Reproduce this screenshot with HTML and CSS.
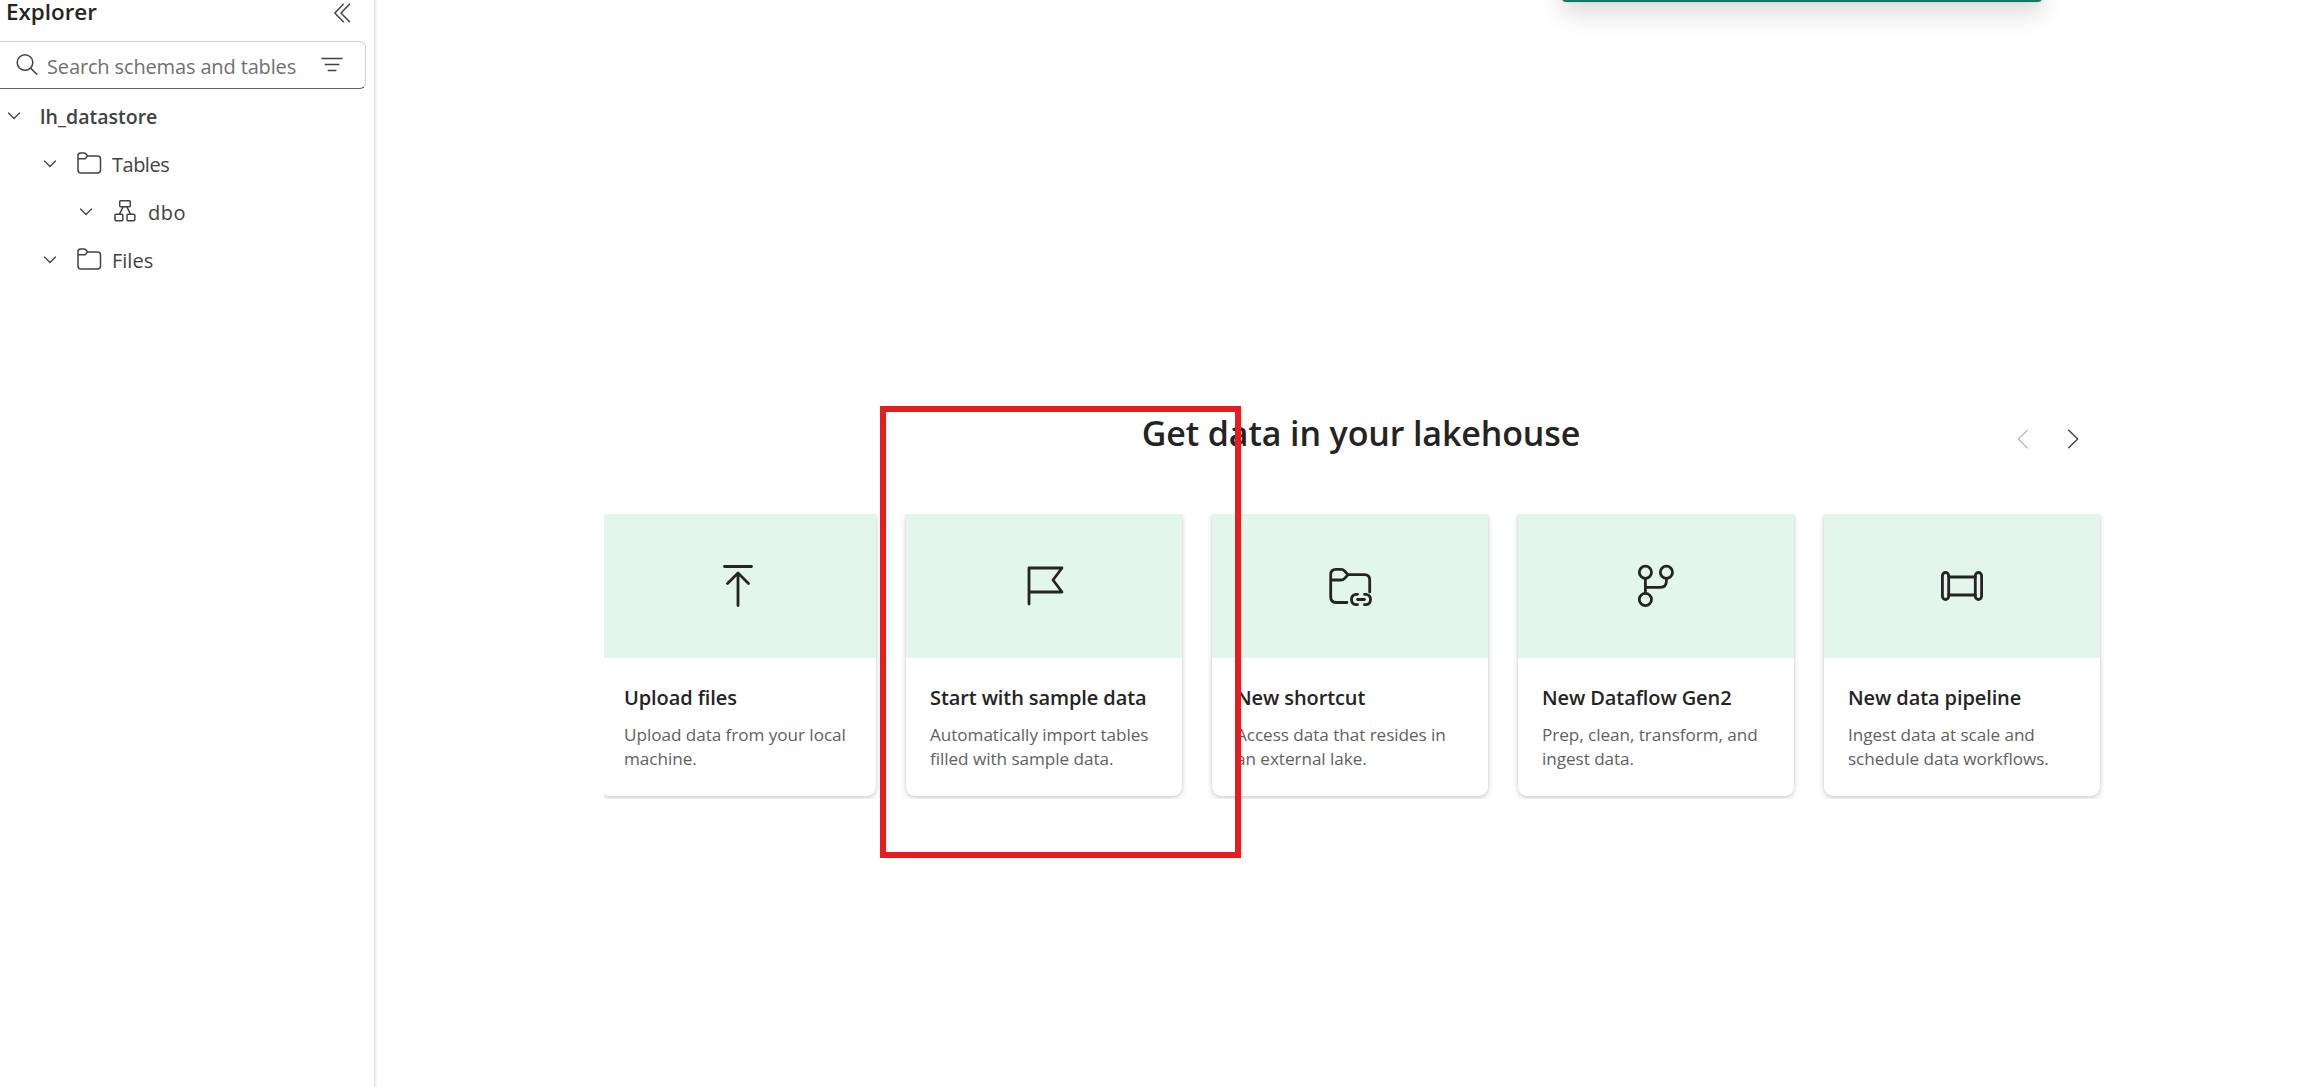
FILE: index.html
```html
<!DOCTYPE html>
<html lang="en">
<head>
<meta charset="utf-8">
<title>Lakehouse explorer</title>
<link rel="stylesheet" href="styles.css">
</head>
<body>
<div class="app">
  <aside class="sidebar">
    <header class="sidebar-head">
      <h2 class="sidebar-title">Explorer</h2>
      <svg class="collapse" width="20" height="20" viewBox="0 0 20 20"><path d="M11.3 1.3 2.8 10l8.500 8.700M17.500 1.300 9 10l8.500 8.700"/></svg>
    </header>
    <div class="search">
      <svg width="24" height="24" viewBox="0 0 24 24"><circle cx="10" cy="9.500" r="7.800"/><path d="m15.600 15.100 6.200 6.200"/></svg>
      <span class="search-text">Search schemas and tables</span>
      <svg class="filter" width="24" height="24" viewBox="0 0 24 24"><path d="M2 5.500h20M5.300 11.500h13.500M8.300 17.500h7.500"/></svg>
    </div>
    <ul class="tree">
      <li class="node root"><svg class="chev" width="24" height="24" viewBox="0 0 24 24"><path d="m6.500 9 5.500 5.500L17.500 9"/></svg><span>lh_datastore</span></li>
      <li class="node level-1"><svg class="chev" width="24" height="24" viewBox="0 0 24 24"><path d="m6.500 9 5.500 5.500L17.500 9"/></svg><svg class="kind" width="26" height="24" viewBox="0 0 26 24"><path d="M2 7.800V4.500Q2 2 4.500 2H8q1 0 1.700.8L11.700 5H21.500q3 0 3 3v11q0 3-3 3H5q-3 0-3-3zH8q1 0 1.700-.7L11.700 5"/></svg><span class="tight">Tables</span></li>
      <li class="node level-2"><svg class="chev" width="24" height="24" viewBox="0 0 24 24"><path d="m6.500 9 5.500 5.500L17.500 9"/></svg><svg class="kind" width="26" height="24" viewBox="0 0 26 24"><rect x="7.700" y="1.700" width="10.600" height="6" rx="1"/><rect x="3" y="15.300" width="7.800" height="6.500" rx="1"/><rect x="15" y="15.300" width="7.800" height="6.500" rx="1"/><path d="m11.200 7.700-3.800 7.600M14.800 7.700l3.800 7.600"/></svg><span class="wide">dbo</span></li>
      <li class="node level-1"><svg class="chev" width="24" height="24" viewBox="0 0 24 24"><path d="m6.500 9 5.500 5.500L17.500 9"/></svg><svg class="kind" width="26" height="24" viewBox="0 0 26 24"><path d="M2 7.800V4.500Q2 2 4.500 2H8q1 0 1.700.8L11.700 5H21.500q3 0 3 3v11q0 3-3 3H5q-3 0-3-3zH8q1 0 1.700-.7L11.700 5"/></svg><span>Files</span></li>
    </ul>
  </aside>
  <main class="main">
    <section class="get-data">
      <header class="get-data-head">
        <h1 class="get-data-title">Get data in your lakehouse</h1>
        <nav class="pager">
          <svg class="disabled" width="30" height="30" viewBox="0 0 30 30"><path d="m19.300 6.300-9 8.700 9 8.700"/></svg>
          <svg width="30" height="30" viewBox="0 0 30 30"><path d="m10.700 6.300 9 8.700-9 8.700"/></svg>
        </nav>
      </header>
      <div class="cards">
        <article class="card">
          <div class="card-art"><svg width="48" height="48" viewBox="0 0 48 48"><path d="M10.500 4.500h27M24 11.500V43.500M13.500 21.500 24 11l10.500 10.500"/></svg></div>
          <div class="card-body"><h3>Upload files</h3><p>Upload data from your local machine.</p></div>
        </article>
        <article class="card">
          <div class="card-art"><svg width="48" height="48" viewBox="0 0 48 48"><path d="M9 42V6H42l-9 12 9 12H9"/></svg></div>
          <div class="card-body"><h3>Start with sample data</h3><p>Automatically import tables filled with sample data.</p></div>
        </article>
        <article class="card">
          <div class="card-art"><svg width="48" height="48" viewBox="0 0 48 48"><path d="M21 40.500H10.200q-5.500 0-5.500-5.500V12.500q0-5.200 5.200-5.200h5.200q2 0 3.300 1.500l3.600 3.900H38.500q5.200 0 5.200 5.200V30M4.700 18h10.400q2 0 3.300-1.400L22 12.700"/><path d="M31.500 32.300H30q-4.500.5-4.500 5.200T30 42.700h1.500M38.500 32.300H40q4.500.5 4.500 5.200T40 42.700h-1.500M31.500 37.500h7"/></svg></div>
          <div class="card-body"><h3>New shortcut</h3><p>Access data that resides in an external lake.</p></div>
        </article>
        <article class="card">
          <div class="card-art"><svg width="48" height="48" viewBox="0 0 48 48"><circle cx="13.400" cy="10.300" r="6.100"/><circle cx="34.400" cy="10.300" r="6.100"/><circle cx="13.400" cy="37.500" r="6.100"/><path d="M13.400 16.400v15M13.400 25.300H28.400q6 0 6-6v-2.900"/></svg></div>
          <div class="card-body"><h3>New Dataflow Gen2</h3><p>Prep, clean, transform, and ingest data.</p></div>
        </article>
        <article class="card">
          <div class="card-art"><svg width="48" height="48" viewBox="0 0 48 48"><rect x="4.400" y="10.500" width="6.300" height="27" rx="3.150"/><rect x="37.300" y="10.500" width="6.300" height="27" rx="3.150"/><path d="M10.700 15h26.600M10.700 33h26.600"/></svg></div>
          <div class="card-body"><h3>New data pipeline</h3><p>Ingest data at scale and schedule data workflows.</p></div>
        </article>
      </div>
    </section>
  </main>
</div>
<div class="notice"></div>
<div class="highlight"></div>
</body>
</html>
```
FILE: styles.css
```css
* { box-sizing: border-box; }
body {
  margin: 0;
  background: #fff;
  color: #242424;
  font-family: "Open Sans", "Noto Sans", sans-serif;
  overflow: hidden;
}
h1, h2, h3, p, ul { margin: 0; padding: 0; }
h1, h2, h3 { font-weight: 600; }
svg {
  display: block;
  flex: none;
  fill: none;
  stroke: #424242;
  stroke-width: 1.500;
  stroke-linecap: round;
  stroke-linejoin: round;
}
.app { display: flex; height: 1087px; }

/* Explorer pane */
.sidebar {
  width: 375px;
  flex: none;
  border-right: 1px solid #e3e3e3;
  box-shadow: 1px 0 2px rgba(0, 0, 0, .1);
}
.sidebar-head {
  display: flex;
  align-items: flex-start;
  justify-content: space-between;
  height: 41px;
  padding: 0 22px 0 6px;
}
.sidebar-title { font-size: 22.400px; line-height: 24px; }
.collapse { margin-top: 3px; }
.search {
  display: flex;
  align-items: center;
  width: 366px;
  height: 48px;
  padding: 0 21px 0 15px;
  border: 1px solid #d1d1d1;
  border-left: 0;
  border-bottom-color: #616161;
  border-radius: 0 6px 6px 0;
}
.search-text {
  margin: 3px 0 0 8px;
  color: #707070;
  font-size: 20px;
  letter-spacing: -.14px;
  white-space: nowrap;
}
.filter { margin-left: auto; }
.tree { list-style: none; padding-top: 3px; }
.node {
  display: flex;
  align-items: center;
  height: 48px;
  padding-left: 2px;
  color: #424242;
  font-size: 20px;
}
.chev { stroke-width: 1.300; }
.kind { margin: 0 10px 2px 14px; }
.root { font-size: 19.500px; font-weight: 600; }
.root .chev { margin-right: 14px; }
.level-1 { padding-left: 38px; }
.level-2 { padding-left: 74px; }
.tight { letter-spacing: -.5px; }
.wide { letter-spacing: .5px; }

/* Carousel of data sources */
.main { flex: 1; padding: 409px 196px 0 229px; }
.get-data-head {
  display: grid;
  grid-template-columns: 1fr auto 1fr;
  height: 105px;
}
.get-data-title {
  grid-column: 2;
  font-size: 34px;
  line-height: 48px;
  letter-spacing: -.13px;
}
.pager {
  display: flex;
  justify-content: flex-end;
  gap: 20px;
  padding: 15px 30px 0 0;
}
.pager .disabled { stroke: #bdbdbd; }
.cards {
  display: flex;
  gap: 30px;
  height: 285px;
  overflow: hidden;
}
.card {
  flex: none;
  width: 276px;
  height: 282px;
  border-radius: 0 0 9px 9px;
  background: #fff;
  box-shadow: 0 0 3px rgba(0, 0, 0, .12), 0 3px 6px rgba(0, 0, 0, .14);
}
.card:first-child { margin-left: -4px; }
.card-art {
  display: grid;
  place-items: center;
  height: 144px;
  background: #e3f6ed;
}
.card-art svg { stroke: #242424; stroke-width: 2.800; }
.card-body { padding: 25px 20px 0 24px; }
.card h3 { font-size: 20px; line-height: 30px; letter-spacing: -.1px; white-space: nowrap; }
.card p {
  margin-top: 9.500px;
  color: #616161;
  font-size: 17.150px;
  line-height: 24px;
  letter-spacing: -.05px;
}

/* Toast that is sliding past the top edge */
.notice {
  position: absolute;
  top: -60px;
  left: 1562px;
  width: 480px;
  height: 62px;
  border-radius: 4px;
  background: #117865;
  box-shadow: 0 0 3px rgba(0, 0, 0, .12), 0 12px 24px rgba(0, 0, 0, .14);
}
/* Callout frame */
.highlight {
  position: absolute;
  top: 406px;
  left: 880px;
  width: 361px;
  height: 452px;
  border: 6px solid #e81c1c;
}
```
